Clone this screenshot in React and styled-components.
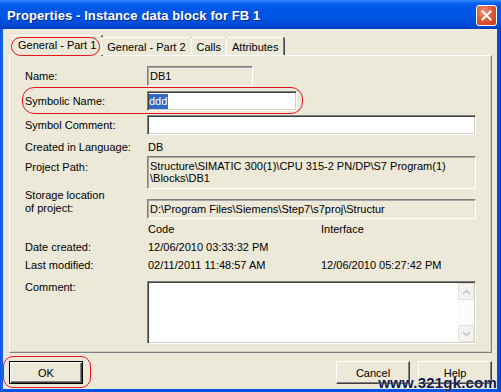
import React from "react";
import styled, { createGlobalStyle } from "styled-components";

const Global = createGlobalStyle`
  html, body { margin: 0; padding: 0; background: #fff; }
  body { font-family: "Liberation Sans", Arial, sans-serif; font-size: 11px; color: #000; }
  * { box-sizing: border-box; }
`;

const Window = styled.div`
  position: relative;
  width: 501px;
  height: 392px;
  display: flex;
  flex-direction: column;
  background: linear-gradient(to right, #0a4fd8 0, #1d6cf2 2px, #0055e5 3px, #0055e5 calc(100% - 4px), #0742c0 100%);
`;

const TitleBar = styled.div`
  height: 29px;
  flex: none;
  display: flex;
  align-items: center;
  padding: 0 4px 0 7px;
  background: linear-gradient(to bottom, #3d8dff 0, #0a62ee 3px, #0058e8 7px, #0053e2 20px, #0148cf 26px, #003dbc 29px);
`;

const Title = styled.div`
  flex: 1;
  color: #fff;
  font-weight: bold;
  font-size: 13px;
  letter-spacing: 0.1px;
  text-shadow: 1px 1px 0 #0a2a88;
  padding-top: 1px;
`;

const CloseButton = styled.div`
  width: 21px;
  height: 21px;
  margin-top: 1px;
  border: 1px solid #fff;
  border-radius: 3px;
  background: radial-gradient(circle at 35% 30%, #f0907a 0, #e05b3a 45%, #c9371a 100%);
  display: flex;
  align-items: center;
  justify-content: center;
`;

const Body = styled.div`
  flex: 1;
  margin: 0 4px 3px 3px;
  background: #ece9d8;
  padding: 6px 5px 5px 6px;
  display: flex;
  flex-direction: column;
`;

const TabRow = styled.div`
  display: flex;
  align-items: flex-end;
  height: 20px;
  padding-left: 3px;
  position: relative;
  z-index: 1;
`;

const Tab = styled.div`
  height: ${p => (p.$active ? "21px" : "18px")};
  margin-bottom: ${p => (p.$active ? "-1px" : "0")};
  margin-left: ${p => (p.$active ? "0" : "-1px")};
  padding: 0 5px;
  display: flex;
  align-items: center;
  background: #ece9d8;
  border-top: 1px solid #fff;
  border-left: 1px solid #fff;
  border-right: 1px solid #808080;
  box-shadow: 1px 0 0 #404040;
  border-radius: 2px 2px 0 0;
  padding-bottom: ${p => (p.$active ? "2px" : "0")};
  white-space: nowrap;
`;

const Panel = styled.div`
  height: 298px;
  flex: none;
  border: 1px solid;
  border-color: #fff #808080 #808080 #fff;
  box-shadow: inset -1px -1px 0 #d4d0c8;
  padding: 10px 15px 0 15px;
  display: flex;
  flex-direction: column;
`;

const Row = styled.div`
  display: flex;
  align-items: ${p => (p.$top ? "flex-start" : "center")};
  height: ${p => p.$h}px;
  margin-top: ${p => p.$mt || 0}px;
  flex: none;
`;

const Label = styled.div`
  width: 122px;
  flex: none;
  line-height: 13px;
  padding-top: ${p => p.$pt || 0}px;
  white-space: nowrap;
`;

const Value = styled.div`
  width: ${p => (p.$w ? `${p.$w}px` : "auto")};
  padding-left: 1px;
  white-space: nowrap;
`;

const Field = styled.div`
  width: ${p => (p.$w ? `${p.$w}px` : "100%")};
  height: ${p => p.$h || 20}px;
  align-self: ${p => (p.$end ? "flex-end" : "auto")};
  background: ${p => (p.$readonly ? "#ece9d8" : "#fff")};
  border: 1px solid;
  border-color: #808080 #fff #fff #808080;
  box-shadow: ${p => (p.$readonly ? "inset 1px 1px 0 #a7a6aa" : "inset 1px 1px 0 #404040, inset -1px -1px 0 #d4d0c8")};
  padding: ${p => (p.$multi ? "3px 2px 0 2px" : "0 2px")};
  display: flex;
  align-items: ${p => (p.$multi ? "flex-start" : "center")};
  line-height: 12px;
  white-space: pre;
  overflow: hidden;
  position: relative;
`;

const Selected = styled.span`
  background: #316ac5;
  color: #fff;
  margin-left: -1px;
  padding: 1px 1px 2px 0;
`;

const Scrollbar = styled.div`
  position: absolute;
  top: 1px;
  right: 1px;
  bottom: 1px;
  width: 16px;
  display: flex;
  flex-direction: column;
  justify-content: space-between;
  background: #fbfbf9;
`;

const ScrollButton = styled.div`
  height: 17px;
  border: 1px solid #e3e2da;
  border-radius: 2px;
  background: #f4f3ee;
  display: flex;
  align-items: center;
  justify-content: center;
`;

const ButtonRow = styled.div`
  display: flex;
  margin-top: 8px;
  gap: 8px;
`;

const Button = styled.div`
  width: 74px;
  height: 23px;
  margin-right: ${p => (p.$push ? "auto" : "0")};
  display: flex;
  align-items: center;
  justify-content: center;
  background: #ece9d8;
  border: 1px solid ${p => (p.$default ? "#000" : "#fff")};
  border-right-color: ${p => (p.$default ? "#000" : "#404040")};
  border-bottom-color: ${p => (p.$default ? "#000" : "#404040")};
  box-shadow: ${p => (p.$default
    ? "inset 1px 1px 0 #fff, inset -1px -1px 0 #404040, inset -2px -2px 0 #808080"
    : "inset -1px -1px 0 #808080")};
`;

const Annotation = styled.div`
  position: absolute;
  left: ${p => p.$x}px;
  top: ${p => p.$y}px;
  width: ${p => p.$w}px;
  height: ${p => p.$h}px;
  border: 1px solid #e8141b;
  border-radius: ${p => p.$r}px;
  pointer-events: none;
  z-index: 5;
`;

const Watermark = styled.div`
  position: absolute;
  right: 4px;
  bottom: 1px;
  font-family: "Liberation Sans", Arial, sans-serif;
  font-weight: bold;
  font-size: 15px;
  letter-spacing: 0.2px;
  color: #0f1a4c;
  text-shadow: 0 0 1px #fff;
  z-index: 6;
`;

const Chevron = ({ up }) => (
  <svg width="9" height="6" viewBox="0 0 9 6">
    <path d={up ? "M1 5 L4.5 1.5 L8 5" : "M1 1 L4.5 4.5 L8 1"} fill="none" stroke="#c2c5cd" strokeWidth="1.6" />
  </svg>
);

export default function App() {
  return (
    <>
      <Global />
      <Window>
        <TitleBar>
          <Title>Properties - Instance data block for FB 1</Title>
          <CloseButton>
            <svg width="11" height="11" viewBox="0 0 11 11">
              <path d="M1.5 1.5 L9.5 9.5 M9.5 1.5 L1.5 9.5" stroke="#fff" strokeWidth="2" strokeLinecap="square" />
            </svg>
          </CloseButton>
        </TitleBar>
        <Body>
          <TabRow>
            <Tab $active>General - Part 1</Tab>
            <Tab>General - Part 2</Tab>
            <Tab>Calls</Tab>
            <Tab>Attributes</Tab>
          </TabRow>
          <Panel>
            <Row $h={20}>
              <Label>Name:</Label>
              <Field $w={106} $readonly>DB1</Field>
            </Row>
            <Row $h={20} $mt={5}>
              <Label>Symbolic Name:</Label>
              <Field $w={150}><Selected>ddd</Selected></Field>
            </Row>
            <Row $h={20} $mt={4}>
              <Label>Symbol Comment:</Label>
              <Field />
            </Row>
            <Row $h={16} $mt={4}>
              <Label>Created in Language:</Label>
              <Value>DB</Value>
            </Row>
            <Row $h={33} $mt={1} $top>
              <Label $pt={5}>Project Path:</Label>
              <Field $h={33} $readonly $multi>{"Structure\\SIMATIC 300(1)\\CPU 315-2 PN/DP\\S7 Program(1)\n\\Blocks\\DB1"}</Field>
            </Row>
            <Row $h={30} $top>
              <Label>Storage location<br />of project:</Label>
              <Field $h={20} $readonly $end>{"D:\\Program Files\\Siemens\\Step7\\s7proj\\Structur"}</Field>
            </Row>
            <Row $h={16} $mt={2}>
              <Label />
              <Value $w={173}>Code</Value>
              <Value>Interface</Value>
            </Row>
            <Row $h={16} $mt={2}>
              <Label>Date created:</Label>
              <Value $w={173}>12/06/2010 03:33:32 PM</Value>
            </Row>
            <Row $h={16} $mt={2}>
              <Label>Last modified:</Label>
              <Value $w={173}>02/11/2011 11:48:57 AM</Value>
              <Value>12/06/2010 05:27:42 PM</Value>
            </Row>
            <Row $h={63} $mt={8} $top>
              <Label>Comment:</Label>
              <Field $h={63}>
                <Scrollbar>
                  <ScrollButton><Chevron up /></ScrollButton>
                  <ScrollButton><Chevron /></ScrollButton>
                </Scrollbar>
              </Field>
            </Row>
          </Panel>
          <ButtonRow>
            <Button $default $push>OK</Button>
            <Button>Cancel</Button>
            <Button>Help</Button>
          </ButtonRow>
        </Body>
        <Annotation $x={11} $y={37} $w={89} $h={19} $r={10} />
        <Annotation $x={22} $y={87} $w={281} $h={27} $r={12} />
        <Annotation $x={3} $y={356} $w={88} $h={32} $r={10} />
        <Watermark>www.321gk.com</Watermark>
      </Window>
    </>
  );
}
